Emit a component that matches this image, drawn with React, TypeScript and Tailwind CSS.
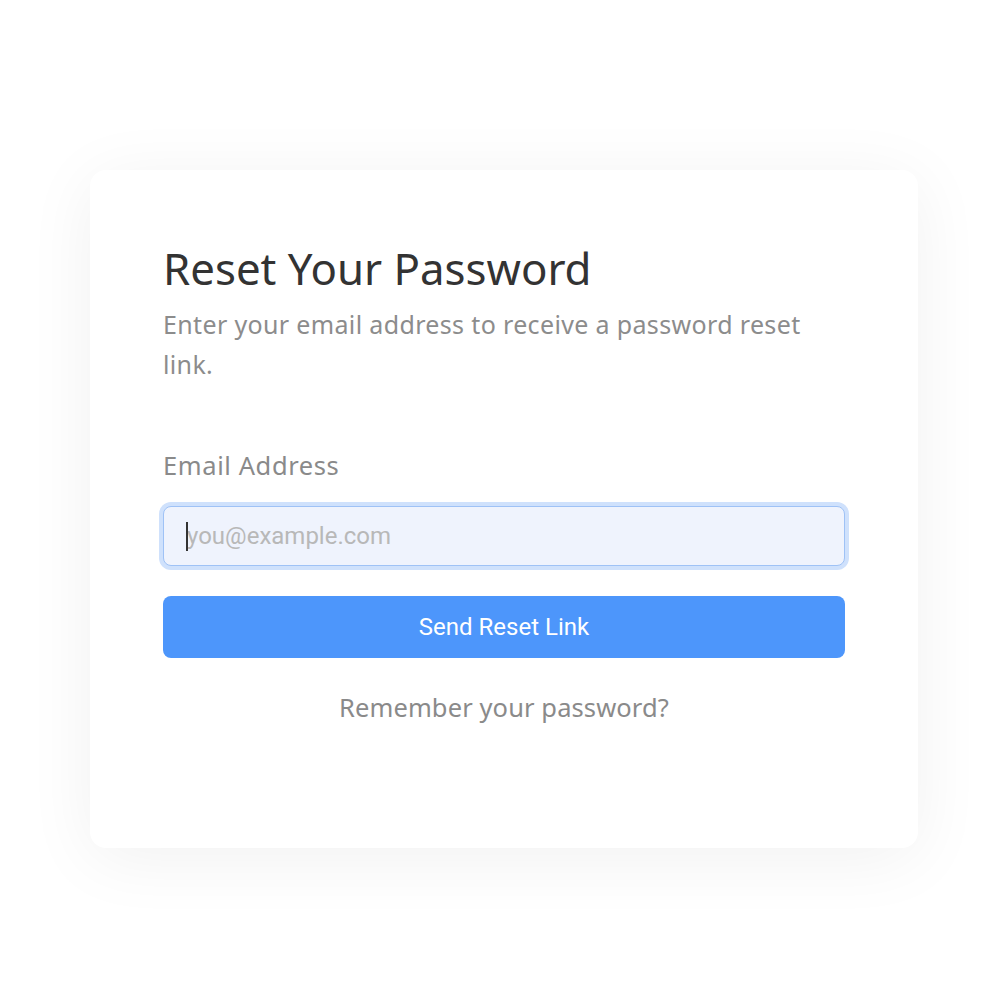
import { useState } from "react";

export default function App() {
  const [email, setEmail] = useState("");

  return (
    <div className="min-h-[1000px] w-full bg-white pl-[90px] pt-[170px] font-['Noto_Sans',sans-serif]">
      <div className="w-[828px] h-[678px] rounded-2xl bg-white px-[73px] pt-[74px] shadow-[0_10px_70px_rgba(0,0,0,0.06)]">
        <h1 className="text-[43.8px] leading-[48px] text-[#333333]">
          Reset Your Password
        </h1>
        <p className="mt-3 text-[25px] leading-[40px] text-[#8c8c8c] tracking-[0.35px]">
          Enter your email address to receive a password reset link.
        </p>

        <form className="mt-[66px] flex flex-col" onSubmit={(e) => e.preventDefault()}>
          <label htmlFor="email" className="text-[25.5px] leading-[30px] text-[#8a8a8a] tracking-[0.6px]">
            Email Address
          </label>
          <div className="relative mt-[26px]">
            <input
              id="email"
              type="email"
              autoFocus
              value={email}
              onChange={(e) => setEmail(e.target.value)}
              placeholder="you@example.com"
              className="h-[60px] w-full rounded-lg border border-[#9fc2f6] bg-[#eff3fd] px-[23px] text-[24px] text-[#333] font-['Roboto',sans-serif] outline-none ring-4 ring-[#cfe1fc] placeholder:text-[#b8b8b8]"
            />
            {/* text caret, as in the screenshot */}
            {email === "" && (
              <span className="pointer-events-none absolute left-[23px] top-[16px] h-[29px] w-[2px] bg-[#333]" />
            )}
          </div>
          <button
            type="submit"
            className="mt-[30px] h-[62px] w-full rounded-lg bg-[#4d96fb] text-[24px] text-white font-['Roboto',sans-serif]"
          >
            Send Reset Link
          </button>
        </form>

        <p className="mt-[34px] text-center text-[25.5px] leading-[30px] text-[#8a8a8a] tracking-[0.1px]">
          Remember your password?
        </p>
      </div>
    </div>
  );
}
